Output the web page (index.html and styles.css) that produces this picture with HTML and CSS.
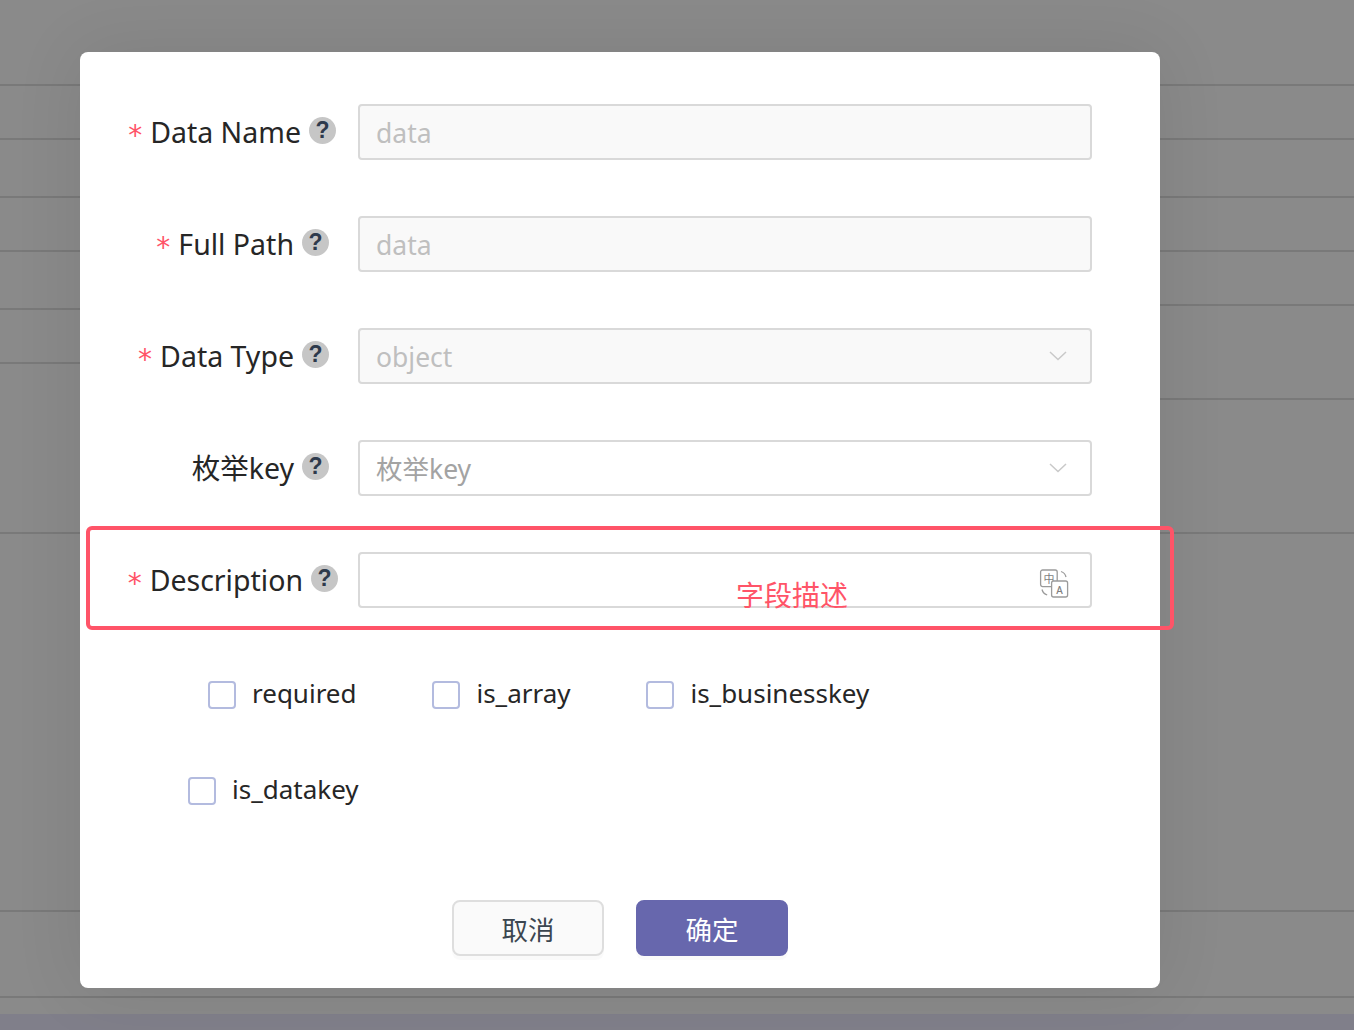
FILE: index.html
```html
<!DOCTYPE html>
<html lang="zh-CN">
<head>
<meta charset="utf-8">
<title>Edit field</title>
<link rel="stylesheet" href="styles.css">
</head>
<body>
<div class="backdrop">
  <div class="stripes">
    <div class="stripe-col">
      <div class="line h86"></div><div class="line h54"></div><div class="line h58"></div><div class="line h54"></div><div class="line h58"></div><div class="line h54"></div><div class="line h170"></div><div class="line h378"></div><div class="line h86"></div>
    </div>
    <div class="stripe-col">
      <div class="line h86"></div><div class="line h54"></div><div class="line h58"></div><div class="line h54"></div><div class="line h54"></div><div class="line h94"></div><div class="line h134"></div><div class="line h378"></div><div class="line h86"></div>
    </div>
  </div>
  <div class="band"></div>
</div>

<div class="modal">
  <div class="form-row">
    <div class="label pad-22"><span class="star">*</span><span class="label-text">Data Name</span><span class="help">?</span></div>
    <div class="field disabled"><span class="value">data</span></div>
  </div>
  <div class="form-row">
    <div class="label pad-29"><span class="star">*</span><span class="label-text">Full Path</span><span class="help">?</span></div>
    <div class="field disabled"><span class="value">data</span></div>
  </div>
  <div class="form-row">
    <div class="label pad-29"><span class="star">*</span><span class="label-text">Data Type</span><span class="help">?</span></div>
    <div class="field disabled"><span class="value">object</span>
      <svg class="chevron" width="18" height="10" viewBox="0 0 18 10"><path d="M1 1l8 7.5L17 1"/></svg>
    </div>
  </div>
  <div class="form-row">
    <div class="label pad-29"><span class="label-text">枚举key</span><span class="help">?</span></div>
    <div class="field"><span class="value muted">枚举key</span>
      <svg class="chevron" width="18" height="10" viewBox="0 0 18 10"><path d="M1 1l8 7.5L17 1"/></svg>
    </div>
  </div>
  <div class="form-row">
    <div class="label pad-20"><span class="star">*</span><span class="label-text">Description</span><span class="help">?</span></div>
    <div class="field"><span class="value"></span>
      <svg class="translate" width="30" height="30" viewBox="0 0 30 30">
        <rect x="1.6" y="1" width="16.6" height="16.6" rx="2"/>
        <rect x="12.6" y="12" width="16" height="16" rx="2" class="front"/>
        <path d="M22 2.5c2.6.8 4.4 2.700 5 5.500M3 20.500c.7 2.700 2.500 4.600 5.200 5.500"/>
        <text x="9.900" y="13.500" class="t-zh">中</text>
        <text x="20.600" y="24.800" class="t-en">A</text>
      </svg>
    </div>
  </div>

  <div class="checks first">
    <label class="check"><span class="box"></span><span class="check-text">required</span></label>
    <label class="check"><span class="box"></span><span class="check-text">is_array</span></label>
    <label class="check"><span class="box"></span><span class="check-text">is_businesskey</span></label>
  </div>
  <div class="checks second">
    <label class="check"><span class="box"></span><span class="check-text">is_datakey</span></label>
  </div>

  <div class="footer">
    <button class="btn">取消</button>
    <button class="btn primary">确定</button>
  </div>
</div>

<div class="note-box"></div>
<div class="note-text">字段描述</div>
</body>
</html>
```
FILE: styles.css
```css
* { box-sizing: border-box; }
html, body { margin: 0; height: 1030px; overflow: hidden; }
body {
  position: relative;
  background: #8a8a8a;
  font-family: "Noto Sans", "Noto Sans CJK SC", sans-serif;
  color: #262626;
}

.backdrop { display: flex; flex-direction: column; height: 1030px; }
.stripes { display: grid; grid-template-columns: 1fr 1fr; height: 1014px; }
.line { border-bottom: 2px solid #797979; }
.h54 { height: 54px; }
.h58 { height: 58px; }
.h86 { height: 86px; }
.h94 { height: 94px; }
.h134 { height: 134px; }
.h170 { height: 170px; }
.h378 { height: 378px; }
.band { flex: 1; background: #807f8a; }

.modal {
  position: absolute;
  left: 80px;
  top: 52px;
  width: 1080px;
  height: 936px;
  padding-top: 52px;
  background: #fff;
  border-radius: 8px;
  box-shadow: 0 0 70px rgba(0, 0, 0, .09);
}

.form-row { display: flex; height: 56px; margin-bottom: 56px; }
.label {
  width: 278px;
  display: flex;
  justify-content: flex-end;
  align-items: center;
  font-size: 28.500px;
  line-height: 56px;
  white-space: nowrap;
}
.pad-20 { padding-right: 20px; }
.pad-22 { padding-right: 22px; }
.pad-29 { padding-right: 29px; }
.star { color: #ff5468; margin: 8px 8px 0 0; font-size: 28px; font-family: "DejaVu Sans", sans-serif; }
.help {
  width: 27px;
  height: 27px;
  margin: -3px 0 0 8px;
  border-radius: 50%;
  background: #c6c6c6;
  color: #2e3a4c;
  font-family: "Liberation Sans", sans-serif;
  font-size: 23px;
  font-weight: 700;
  line-height: 27px;
  text-align: center;
}

.field {
  width: 734px;
  height: 56px;
  border: 2px solid #d9d9d9;
  border-radius: 4px;
  padding: 0 16px;
  display: flex;
  align-items: center;
  justify-content: space-between;
  font-size: 26.500px;
  background: #fff;
}
.field.disabled { background: #f9f9f9; color: #bfbfbf; }
.value { line-height: 54px; margin-top: 2px; }
.muted { color: #a3a3a3; }
.chevron { fill: none; stroke: #c9c9c9; stroke-width: 1.500; margin-right: 7px; }
.translate { fill: none; stroke: #9b9b9b; stroke-width: 1.300; margin-right: 5px; margin-top: 8px; }
.translate .front { fill: #fff; }
.t-zh, .t-en { fill: #7f7f7f; stroke: none; text-anchor: middle; font-family: "Noto Sans CJK SC", sans-serif; }
.t-zh { font-size: 11px; }
.t-en { font-size: 10px; font-family: "Noto Sans", sans-serif; font-weight: 500; }

.checks { display: flex; gap: 75.900px; font-size: 26px; line-height: 28px; }
.checks.first { margin-top: 73px; padding-left: 128px; }
.checks.second { margin-top: 68px; padding-left: 108px; }
.check { display: flex; align-items: center; gap: 16px; height: 28px; }
.check-text { margin-top: -4px; }
.box {
  width: 28px;
  height: 28px;
  border: 2px solid #b3bbdf;
  border-radius: 4px;
  background: #fff;
}

.footer { display: flex; justify-content: center; gap: 32px; margin-top: 95px; }
.btn {
  width: 152px;
  height: 56px;
  border: 2px solid #dedede;
  border-radius: 8px;
  background: #fafafa;
  color: #3c4650;
  font-family: "Noto Sans CJK SC", sans-serif;
  font-size: 26.500px;
  box-shadow: 0 4px 0 rgba(0, 0, 0, .02);
}
.btn.primary { background: #6767ad; border-color: #6767ad; color: #fff; }

.note-box {
  position: absolute;
  left: 86px;
  top: 526px;
  width: 1088px;
  height: 104px;
  border: 4px solid #ff5468;
  border-radius: 6px;
}
.note-text {
  position: absolute;
  left: 736px;
  top: 573px;
  font-family: "Noto Sans CJK SC", sans-serif;
  font-size: 28px;
  line-height: 42px;
  color: #ff5468;
}
```
